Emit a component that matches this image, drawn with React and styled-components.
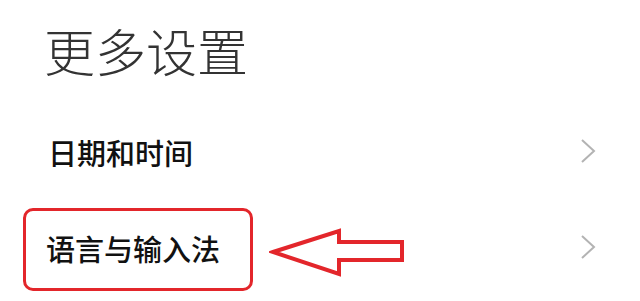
import React from "react";
import styled, { createGlobalStyle } from "styled-components";

const Global = createGlobalStyle`
  html, body { margin: 0; padding: 0; background: #ffffff; }
  body { font-family: "Noto Sans CJK SC", "Noto Sans", sans-serif; }
`;

const Page = styled.div`
  width: 640px;
  height: 301px;
  background: #ffffff;
  overflow: hidden;
`;

const Title = styled.h1`
  margin: 0;
  padding: 25px 0 29px 44px;
  font-size: 51px;
  line-height: 51px;
  font-weight: 300;
  color: #333333;
`;

const Row = styled.div`
  height: 94px;
  display: flex;
  align-items: center;
  justify-content: space-between;
  padding: 0 48px 0 48px;
  box-sizing: border-box;
`;

const Label = styled.span`
  font-size: 29px;
  line-height: 29px;
  font-weight: 500;
  color: #111111;
`;

const LabelGroup = styled.div`
  display: flex;
  align-items: center;
  gap: 16px;
`;

const Highlight = styled.div`
  margin-left: -25px;
  margin-top: 6px;
  padding: 23px 30px 25px 20px;
  border: 3px solid #e3262b;
  border-radius: 10px;
  display: flex;
  align-items: center;
`;

const ArrowSvg = styled.svg`
  display: block;
  margin-top: 12px;
`;

const Chevron = styled.svg`
  display: block;
  margin-right: -4px;
  margin-top: ${(p) => p.$offset || 0}px;
`;

const ChevronIcon = ({ offset }) => (
  <Chevron $offset={offset} width="16" height="26" viewBox="0 0 16 26">
    <polyline
      points="2,2 14,13 2,24"
      fill="none"
      stroke="#b3b3b3"
      strokeWidth="2"
      strokeLinejoin="miter"
    />
  </Chevron>
);

const Arrow = () => (
  <ArrowSvg width="136" height="50" viewBox="0 0 136 50">
    <polygon
      points="4,25 70,4 70,15 133,15 133,33 70,33 70,47"
      fill="none"
      stroke="#e3262b"
      strokeWidth="4"
      strokeLinejoin="miter"
    />
  </ArrowSvg>
);

export default function App() {
  return (
    <>
      <Global />
      <Page>
        <Title>更多设置</Title>
        <Row>
          <Label>日期和时间</Label>
          <ChevronIcon offset={-2} />
        </Row>
        <Row>
          <LabelGroup>
            <Highlight>
              <Label>语言与输入法</Label>
            </Highlight>
            <Arrow />
          </LabelGroup>
          <ChevronIcon offset={2} />
        </Row>
      </Page>
    </>
  );
}
